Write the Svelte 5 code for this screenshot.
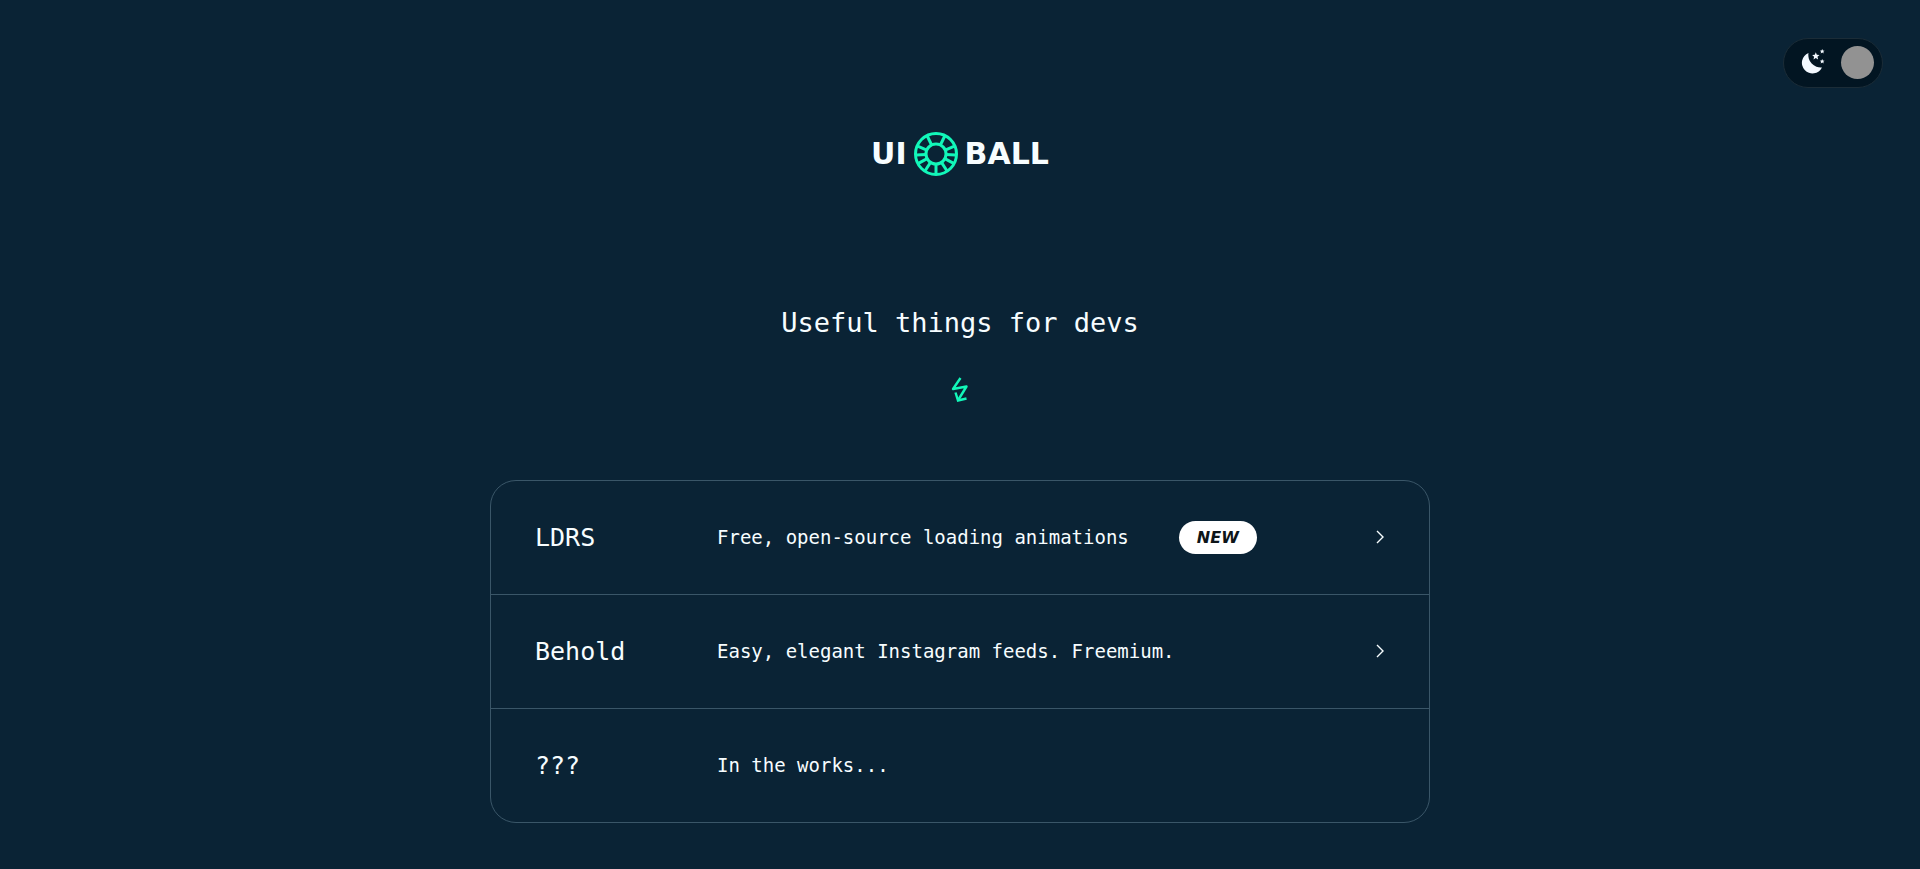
<script>
  let dark = $state(true);

  const products = [
    { name: 'LDRS', text: 'Free, open-source loading animations', isNew: true, href: '#ldrs' },
    { name: 'Behold', text: 'Easy, elegant Instagram feeds. Freemium.', href: '#behold' },
    { name: '???', text: 'In the works...' }
  ];

  const spokes = [26, 67, 93, 118, 147, 180, 213, 242, 267, 293, 334];
</script>

{#snippet content(item)}
  <span class="name">{item.name}</span>
  <span class="text">{item.text}</span>
  {#if item.isNew}<span class="tag">NEW</span>{/if}
  {#if item.href}
    <svg class="chevron" width="8" height="14" viewBox="0 0 8 14" aria-hidden="true">
      <path d="M1 1l6 6-6 6" fill="none" stroke="currentColor" stroke-width="1.4" />
    </svg>
  {/if}
{/snippet}

<div class="page">
  <header>
    <label class="toggle">
      <input type="checkbox" bind:checked={dark} aria-label="Dark mode" />
      <svg width="24" height="26" viewBox="0 0 24 26" fill="#f3f9ff" aria-hidden="true">
        <path d="M7.500 4A10.600 10.600 0 1 0 21 18.500 12.500 12.500 0 0 1 7.500 4z" />
        <path d="M14.800 3.300l1 2.500 2.700.3-2 1.700.6 2.700-2.300-1.400-2.300 1.400.6-2.700-2-1.700 2.700-.3z" />
        <path d="M21.200 0l.7 1.500 1.700.2-1.300 1.100.4 1.700-1.500-.9-1.500.9.4-1.700-1.300-1.100 1.700-.2z" />
        <path d="M21.200 10l.7 1.500 1.700.2-1.300 1.100.4 1.700-1.500-.9-1.500.9.4-1.700-1.300-1.100 1.700-.2z" />
      </svg>
      <span class="knob"></span>
    </label>
  </header>

  <main>
    <a class="logo" href="#home">
      <span>UI</span>
      <svg width="44" height="44" viewBox="-22 -22 44 44" fill="none" stroke="#12f7b9" aria-hidden="true">
        <circle r="20.500" stroke-width="3" />
        <circle r="10" stroke-width="3" />
        {#each spokes as angle}
          <path d="M0-10V-20" stroke-width="3" transform="rotate({angle})" />
        {/each}
      </svg>
      <span>BALL</span>
    </a>

    <h1>Useful things for devs</h1>

    <svg class="bolt" width="18" height="26" viewBox="0 0 18 26" fill="none" stroke="#12f7b9" stroke-width="2.4" aria-hidden="true">
      <path d="M9.500 1L2 12L15.500 9.500L7.500 22.500" stroke-linejoin="round" />
      <path d="M4.500 15.500L7 23.500l8.500-2" />
    </svg>

    <ul>
      {#each products as item}
        <li>
          {#if item.href}
            <a class="row" href={item.href}>{@render content(item)}</a>
          {:else}
            <div class="row">{@render content(item)}</div>
          {/if}
        </li>
      {/each}
    </ul>
  </main>
</div>

<style>
  :global(body) {
    margin: 0;
    background: #0a2335;
  }
  .page {
    box-sizing: border-box;
    min-height: 100vh;
    color: #f7fdff;
    font-family: "DejaVu Sans Mono", monospace;
  }
  a {
    color: inherit;
    text-decoration: none;
  }
  header {
    display: flex;
    justify-content: flex-end;
    padding: 38px 37px 0;
  }
  .toggle {
    position: relative;
    box-sizing: border-box;
    display: flex;
    align-items: center;
    justify-content: space-between;
    width: 100px;
    height: 50px;
    padding: 0 8px 2px 17px;
    border: 1px solid #1b2c37;
    border-radius: 25px;
    background: #021522;
    cursor: pointer;
  }
  .toggle input {
    position: absolute;
    inset: 0;
    margin: 0;
    opacity: 0;
  }
  .knob {
    width: 33px;
    height: 33px;
    border-radius: 50%;
    background: #929292;
  }
  main {
    display: flex;
    flex-direction: column;
    align-items: center;
    padding: 44px 24px 47px;
  }
  .logo {
    display: flex;
    align-items: center;
    gap: 7px;
    font: 700 30px/44px "DejaVu Sans", sans-serif;
  }
  h1 {
    margin: 127px 0 0;
    font-size: 27px;
    font-weight: 400;
    line-height: 40px;
  }
  .bolt {
    margin-top: 34px;
  }
  ul {
    box-sizing: border-box;
    width: 100%;
    max-width: 940px;
    margin: 77px 0 0;
    padding: 0;
    list-style: none;
    border: 1px solid #3a5668;
    border-radius: 26px;
    overflow: hidden;
  }
  li + li {
    border-top: 1px solid #3a5668;
  }
  .row {
    box-sizing: border-box;
    display: flex;
    align-items: center;
    min-height: 113px;
    padding: 0 45px 1px 44px;
  }
  .name {
    width: 182px;
    font-size: 25px;
  }
  .text {
    font-size: 19px;
  }
  .tag {
    margin-left: 50px;
    padding: 0 18px;
    border-radius: 17px;
    background: #fff;
    color: #0d1519;
    font: italic 700 16px/33px "DejaVu Sans", sans-serif;
  }
  .chevron {
    margin-left: auto;
  }
</style>
